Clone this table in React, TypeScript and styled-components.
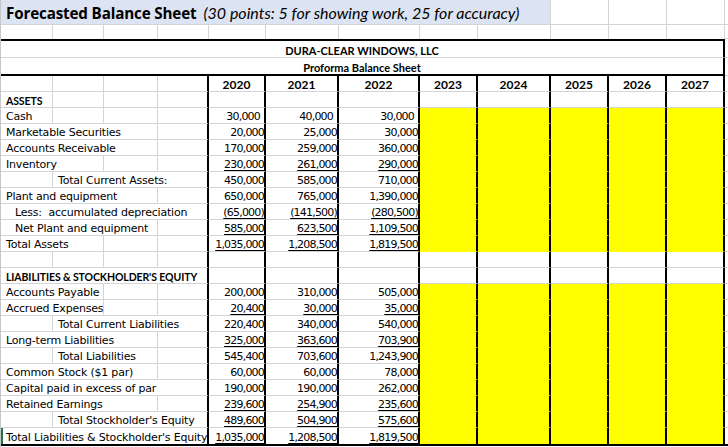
import React from 'react';
import styled, { createGlobalStyle } from 'styled-components';

const GRID = '#d4d4d4';
const INK = '#000000';
const YELLOW = '#ffff00';
const COLS = '52px 51px 54px 51px 57px 73px 81px 58px 73px 58px 58px 58px 3px';
const HEAD_FONT = "Lato, 'Liberation Sans', sans-serif";
const WIDE_FONT = "'Open Sans', Lato, sans-serif";
const CELL_FONT = "'DejaVu Sans', Verdana, sans-serif";

const Global = createGlobalStyle`
  html, body { margin: 0; padding: 0; background: #ffffff; }
  body { width: 728px; height: 447px; overflow: hidden; }
`;

const Sheet = styled.div`
  width: 728px;
  height: 447px;
  box-sizing: border-box;
  border-left: 1px solid #c6c6c6;
  display: flex;
  flex-direction: column;
  color: ${INK};
`;

const Row = styled.div<{ $h?: number }>`
  display: grid;
  grid-template-columns: ${COLS};
  height: ${(p) => p.$h ?? 16}px;
  flex: none;
`;

const Blank = styled.div<{
  $span?: number;
  $thick?: boolean;
  $fill?: boolean;
  $last?: boolean;
  $noBottom?: boolean;
  $noRight?: boolean;
}>`
  grid-column: span ${(p) => p.$span ?? 1};
  box-sizing: border-box;
  min-width: 0;
  overflow: hidden;
  white-space: nowrap;
  background: ${(p) => (p.$fill ? YELLOW : 'transparent')};
  border-right: ${(p) =>
    p.$noRight ? 'none' : p.$thick ? `2px solid ${INK}` : `1px solid ${GRID}`};
  border-bottom: ${(p) =>
    p.$noBottom
      ? 'none'
      : p.$last
      ? `2px solid ${INK}`
      : `1px solid ${p.$fill ? YELLOW : GRID}`};
`;

const TitleCell = styled.div`
  grid-column: span 9;
  box-sizing: border-box;
  background: #dce3f3;
  border-right: 1px solid ${GRID};
  border-bottom: 1px solid ${GRID};
  display: flex;
  align-items: center;
  padding: 1px 0 0 5px;
  white-space: nowrap;
  gap: 7px;
`;

const TitleBold = styled.span`
  font-family: ${WIDE_FONT};
  font-weight: 700;
  font-size: 15.2px;
  letter-spacing: -0.15px;
`;

const TitleNote = styled.span`
  font-family: ${HEAD_FONT};
  font-style: italic;
  font-size: 16px;
`;

const Banner = styled.div<{ $top?: boolean; $size: number }>`
  grid-column: span 12;
  box-sizing: border-box;
  border-top: ${(p) => (p.$top ? `2px solid ${INK}` : 'none')};
  border-right: 2px solid ${INK};
  border-bottom: ${(p) => (p.$top ? `1px solid ${GRID}` : `2px solid ${INK}`)};
  display: flex;
  align-items: center;
  justify-content: center;
  padding-top: 2px;
  font-family: ${HEAD_FONT};
  font-weight: 700;
  font-size: ${(p) => p.$size}px;
  white-space: nowrap;
`;

const YearCell = styled(Blank)`
  display: flex;
  align-items: center;
  justify-content: center;
  font-family: ${HEAD_FONT};
  font-weight: 700;
  font-size: 12px;
  padding-top: 2px;
`;

const LabelCell = styled(Blank)<{ $indent?: number; $head?: boolean; $marker?: boolean }>`
  display: flex;
  align-items: center;
  padding-left: ${(p) => p.$indent ?? 5}px;
  padding-top: 2px;
  font-family: ${(p) => (p.$head ? HEAD_FONT : CELL_FONT)};
  font-weight: ${(p) => (p.$head ? 700 : 400)};
  font-size: ${(p) => (p.$head ? 10.5 : 11)}px;
  letter-spacing: ${(p) => (p.$head ? '-0.1px' : '-0.2px')};
  box-shadow: ${(p) => (p.$marker ? 'inset 2px 0 0 #217346' : 'none')};
`;

const NumCell = styled(Blank)<{ $pad?: boolean }>`
  display: flex;
  align-items: center;
  justify-content: flex-end;
  padding-top: 2px;
  padding-right: ${(p) => (p.$pad ? 4 : 0)}px;
  font-family: ${CELL_FONT};
  font-size: 11px;
  letter-spacing: -0.8px;
`;

const Figure = styled.span<{ $u?: 'single' | 'double' }>`
  text-decoration: ${(p) => (p.$u ? 'underline' : 'none')};
  text-decoration-style: ${(p) => (p.$u === 'double' ? 'double' : 'solid')};
  text-decoration-thickness: 1px;
  text-underline-offset: 2px;
`;

type Line = {
  label?: string;
  col?: number;
  span?: number;
  indent?: number;
  head?: boolean;
  values?: [string, string, string];
  u?: 'single' | 'double';
  pad?: boolean;
  fill?: boolean;
  last?: boolean;
};

const lines: Line[] = [
  { label: 'ASSETS', head: true, span: 1 },
  { label: 'Cash', span: 1, values: ['30,000', '40,000', '30,000'], pad: true, fill: true },
  { label: 'Marketable Securities', span: 3, values: ['20,000', '25,000', '30,000'], fill: true },
  { label: 'Accounts Receivable', span: 3, values: ['170,000', '259,000', '360,000'], fill: true },
  { label: 'Inventory', span: 2, values: ['230,000', '261,000', '290,000'], u: 'single', fill: true },
  { label: 'Total Current Assets:', col: 2, span: 3, values: ['450,000', '585,000', '710,000'], fill: true },
  { label: 'Plant and equipment', span: 3, values: ['650,000', '765,000', '1,390,000'], fill: true },
  {
    label: 'Less:\u00a0 accumulated depreciation',
    span: 4,
    indent: 14,
    values: ['(65,000)', '(141,500)', '(280,500)'],
    u: 'single',
    fill: true,
  },
  {
    label: 'Net Plant and equipment',
    span: 3,
    indent: 14,
    values: ['585,000', '623,500', '1,109,500'],
    u: 'single',
    fill: true,
  },
  { label: 'Total Assets', span: 2, values: ['1,035,000', '1,208,500', '1,819,500'], u: 'double', fill: true },
  {},
  { label: "LIABILITIES & STOCKHOLDER'S EQUITY", head: true, span: 4 },
  { label: 'Accounts Payable', span: 2, values: ['200,000', '310,000', '505,000'], fill: true },
  { label: 'Accrued Expenses', span: 2, values: ['20,400', '30,000', '35,000'], u: 'single', fill: true },
  { label: 'Total Current Liabilities', col: 2, span: 3, values: ['220,400', '340,000', '540,000'], fill: true },
  { label: 'Long-term Liabilities', span: 3, values: ['325,000', '363,600', '703,900'], u: 'single', fill: true },
  { label: 'Total Liabilities', col: 2, span: 2, values: ['545,400', '703,600', '1,243,900'], fill: true },
  { label: 'Common Stock ($1 par)', span: 3, values: ['60,000', '60,000', '78,000'], fill: true },
  { label: 'Capital paid in excess of par', span: 4, values: ['190,000', '190,000', '262,000'], fill: true },
  { label: 'Retained Earnings', span: 3, values: ['239,600', '254,900', '235,600'], u: 'single', fill: true },
  {
    label: "Total Stockholder's Equity",
    col: 2,
    span: 3,
    values: ['489,600', '504,900', '575,600'],
    u: 'single',
    fill: true,
  },
  {
    label: "Total Liabilities & Stockholder's Equity",
    span: 4,
    values: ['1,035,000', '1,208,500', '1,819,500'],
    u: 'double',
    fill: true,
    last: true,
  },
];

const years = ['2020', '2021', '2022', '2023', '2024', '2025', '2026', '2027'];
const forecastCols = [0, 1, 2, 3, 4];
const labelCols = [1, 2, 3, 4];

function LabelArea({ line }: { line: Line }) {
  const start = line.col ?? 1;
  const span = line.span ?? 1;
  const cells: React.ReactNode[] = [];
  let c = 1;
  while (c <= 4) {
    if (line.label && c === start) {
      const end = c + span - 1;
      cells.push(
        <LabelCell
          key={c}
          $span={span}
          $thick={end === 4}
          $last={line.last}
          $head={line.head}
          $indent={line.indent}
          $marker={line.last && c === 1}
        >
          {line.label}
        </LabelCell>
      );
      c = end + 1;
    } else {
      cells.push(<Blank key={c} $thick={c === 4} $last={line.last} />);
      c += 1;
    }
  }
  return <>{cells}</>;
}

function DataRow({ line }: { line: Line }) {
  return (
    <Row $h={line.last ? 18 : 16}>
      <LabelArea line={line} />
      {[0, 1, 2].map((i) => (
        <NumCell key={`n${i}`} $thick $last={line.last} $pad={line.pad}>
          {line.values ? <Figure $u={line.u}>{line.values[i]}</Figure> : null}
        </NumCell>
      ))}
      {forecastCols.map((i) => (
        <Blank key={`f${i}`} $thick $fill={line.fill} $last={line.last} />
      ))}
      <Blank $noRight $last={line.last} />
    </Row>
  );
}

export default function App() {
  return (
    <>
      <Global />
      <Sheet>
        <Row $h={25}>
          <TitleCell>
            <TitleBold>Forecasted Balance Sheet</TitleBold>
            <TitleNote>(30 points: 5 for showing work, 25 for accuracy)</TitleNote>
          </TitleCell>
          <Blank />
          <Blank />
          <Blank />
          <Blank $noRight />
        </Row>
        <Row $h={14}>
          {Array.from({ length: 12 }, (_, i) => (
            <Blank key={i} $noBottom />
          ))}
          <Blank $noRight />
        </Row>
        <Row $h={19}>
          <Banner $top $size={11}>
            DURA-CLEAR WINDOWS, LLC
          </Banner>
          <Blank $noRight />
        </Row>
        <Row $h={18}>
          <Banner $size={11}>Proforma Balance Sheet</Banner>
          <Blank $noRight />
        </Row>
        <Row>
          {labelCols.map((c) => (
            <Blank key={c} $thick={c === 4} />
          ))}
          {years.map((y) => (
            <YearCell key={y} $thick>
              {y}
            </YearCell>
          ))}
          <Blank $noRight />
        </Row>
        {lines.map((line, i) => (
          <DataRow key={i} line={line} />
        ))}
      </Sheet>
    </>
  );
}
